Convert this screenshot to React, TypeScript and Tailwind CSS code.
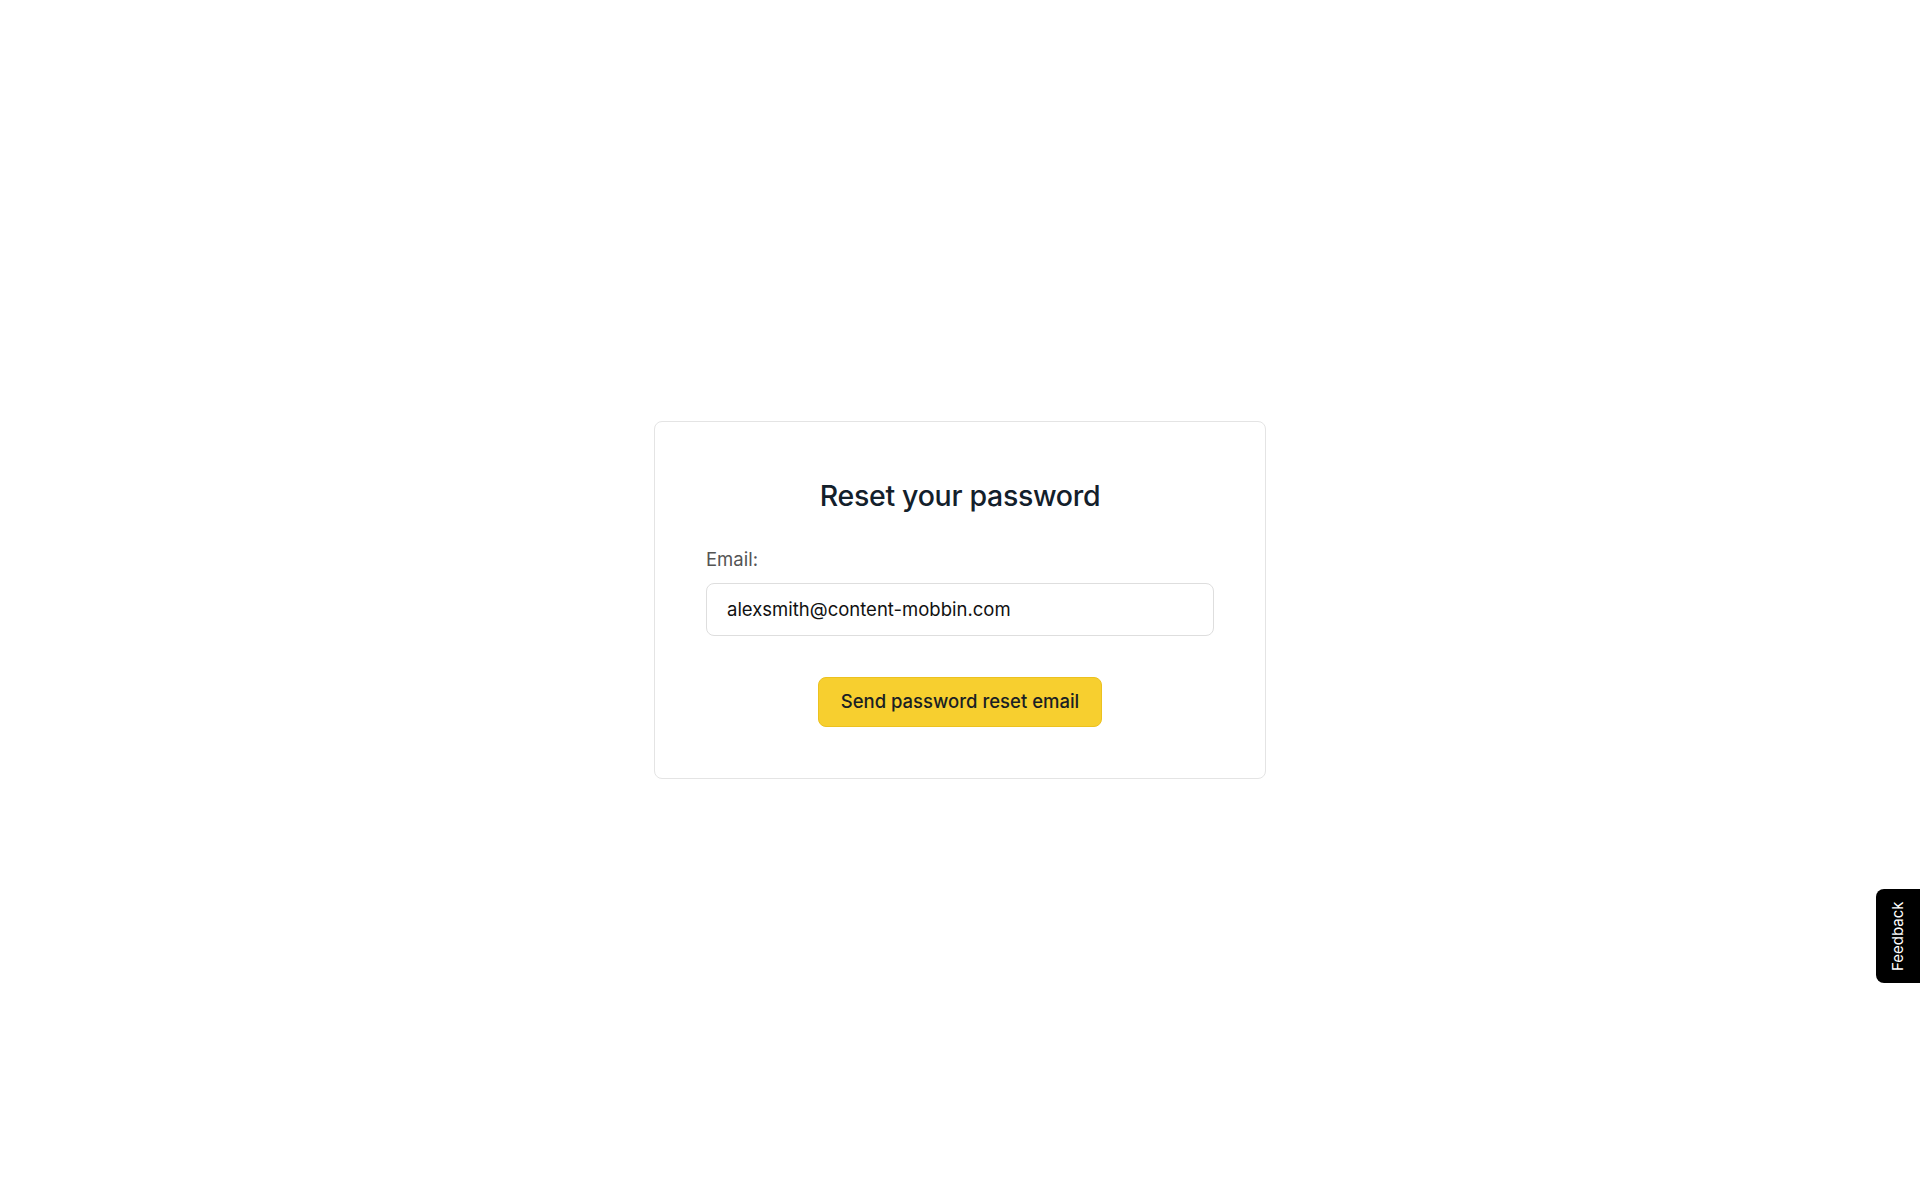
export default function App() {
  return (
    <div className="relative flex min-h-screen items-center justify-center bg-white font-['Inter',sans-serif]">
      <div className="flex w-[612px] flex-col rounded-lg border border-[#e4e4e4] bg-white px-[51px] pb-[51px] pt-[56px]">
        <h1 className="text-center text-[28.5px] leading-[36px] font-medium tracking-[-0.3px] text-[#13202b]">
          Reset your password
        </h1>
        <label className="mt-[33px] text-[18.5px] leading-[24px] text-[#545454]">Email:</label>
        <div className="mt-[12px] flex h-[53px] items-center rounded-lg border border-[#dedede] px-5 text-[18.5px] text-[#111]">
          alexsmith@content-mobbin.com
        </div>
        <div className="mt-[41px] flex justify-center">
          <button className="h-[50px] rounded-lg border border-[#ecc11f] bg-[#f7cf2f] px-[22px] text-[18.5px] font-medium text-[#1a1f24]">
            Send password reset email
          </button>
        </div>
      </div>
      <div className="fixed right-0 top-[889px] flex h-[94px] w-[44px] items-center justify-center rounded-l-lg bg-black">
        <span className="-rotate-90 whitespace-nowrap text-[15px] text-white">Feedback</span>
      </div>
    </div>
  );
}
